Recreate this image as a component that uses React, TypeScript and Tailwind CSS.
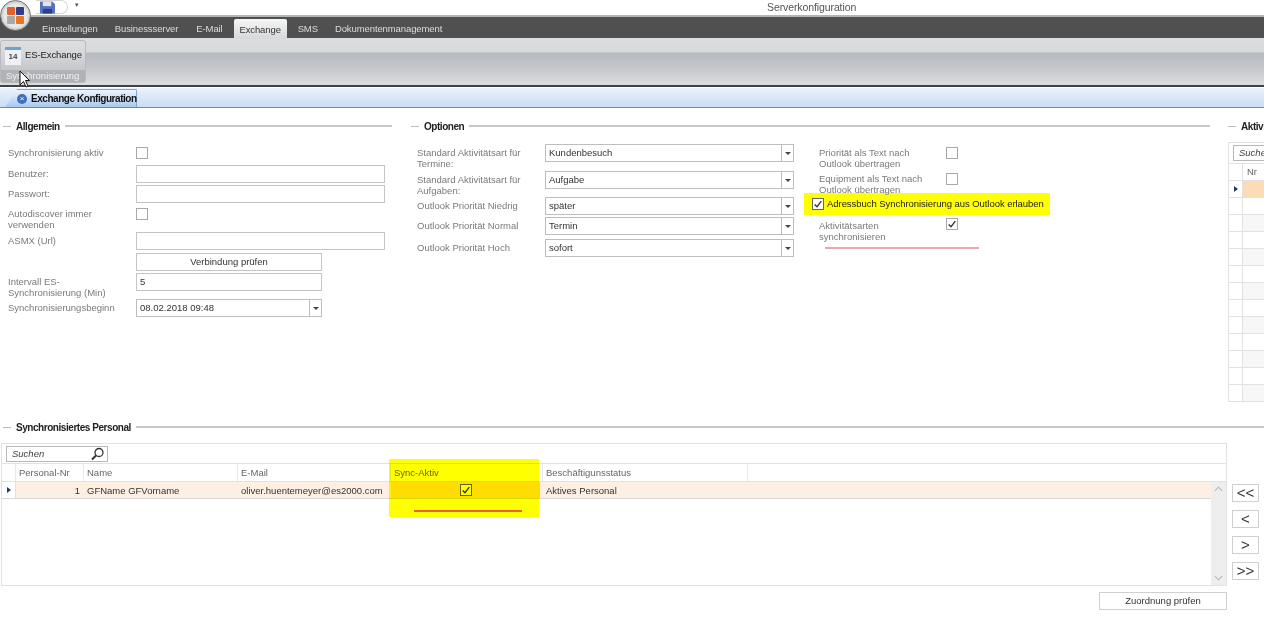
import React from "react";

const labelCls = "text-[9.5px] leading-[11px] text-[#7a7a7a]";

function Legend({ title, className = "" }: { title: string; className?: string }) {
  return (
    <div className={`flex items-center h-[14px] ${className}`}>
      <div className="w-[8px] h-px bg-[#bdbdbd]" />
      <span className="px-[5px] text-[10px] font-bold tracking-[-0.45px] text-[#222] whitespace-nowrap">{title}</span>
      <div className="flex-1 h-[2px] bg-[#c8c8c8]" />
    </div>
  );
}

function Check({ checked = false, strong = false }: { checked?: boolean; strong?: boolean }) {
  return (
    <div className={`w-[12px] h-[12px] shrink-0 border flex items-center justify-center ${strong ? "border-[#666]" : "border-[#a8a8a8]"} bg-white`}>
      {checked && (
        <svg viewBox="0 0 12 12" className="w-[10px] h-[10px]">
          <path d="M2 6.5 L4.8 9.3 L10 2.5" fill="none" stroke="#333" strokeWidth="1.6" />
        </svg>
      )}
    </div>
  );
}

function Input({ value = "", w = "w-[249px]" }: { value?: string; w?: string }) {
  return (
    <div className={`${w} h-[18px] border border-[#c4c4c4] bg-white px-[3px] text-[9.5px] leading-[16px] text-[#333]`}>{value}</div>
  );
}

function Combo({ value, w = "w-[249px]" }: { value: string; w?: string }) {
  return (
    <div className={`${w} h-[18px] border border-[#bdbdbd] bg-white flex text-[9.5px] leading-[16px] text-[#333]`}>
      <span className="flex-1 px-[3px]">{value}</span>
      <span className="w-[12px] border-l border-[#bdbdbd] flex items-center justify-center">
        <span className="w-0 h-0 border-x-[3px] border-x-transparent border-t-[3px] border-t-[#444]" />
      </span>
    </div>
  );
}

function Row({ h, label, children }: { h: string; label?: string; children: React.ReactNode }) {
  return (
    <div className={`flex ${h}`}>
      <div className={`w-[128px] shrink-0 pr-[10px] pt-[3px] ${labelCls}`}>{label}</div>
      {children}
    </div>
  );
}

function OptRow({ h, label, value }: { h: string; label: string; value: string }) {
  return (
    <div className={`flex ${h}`}>
      <div className={`w-[128px] shrink-0 pr-[10px] pt-[3px] ${labelCls}`}>{label}</div>
      <Combo value={value} />
    </div>
  );
}

const rowArrow = <span className="w-0 h-0 border-y-[3px] border-y-transparent border-l-[4px] border-l-[#1f3c6e]" />;

function Allgemein() {
  return (
    <div className="w-[389px] shrink-0">
      <Legend title="Allgemein" />
      <div className="pl-[5px] pt-[11px]">
        <Row h="h-[21px]" label="Synchronisierung aktiv"><div className="pt-[3px]"><Check /></div></Row>
        <Row h="h-[20px]" label="Benutzer:"><Input /></Row>
        <Row h="h-[20px]" label="Passwort:"><Input /></Row>
        <Row h="h-[27px]" label="Autodiscover immer verwenden"><div className="pt-[3px]"><Check /></div></Row>
        <Row h="h-[21px]" label="ASMX (Url)"><Input /></Row>
        <Row h="h-[20px]">
          <div className="w-[186px] h-[18px] border border-[#c4c4c4] bg-white text-center text-[9.5px] leading-[16px] text-[#333]">Verbindung prüfen</div>
        </Row>
        <Row h="h-[26px]" label="Intervall ES-Synchronisierung (Min)"><Input value="5" w="w-[186px]" /></Row>
        <Row h="h-[20px]" label="Synchronisierungsbeginn"><Combo value="08.02.2018 09:48" w="w-[186px]" /></Row>
      </div>
    </div>
  );
}

function Optionen() {
  return (
    <div className="w-[799px] shrink-0 ml-[19px]">
      <Legend title="Optionen" />
      <div className="flex pl-[6px] pt-[11px]">
        <div className="w-[387px] shrink-0">
          <OptRow h="h-[27px]" label="Standard Aktivitätsart für Termine:" value="Kundenbesuch" />
          <OptRow h="h-[26px]" label="Standard Aktivitätsart für Aufgaben:" value="Aufgabe" />
          <OptRow h="h-[20px]" label="Outlook Priorität Niedrig" value="später" />
          <OptRow h="h-[22px]" label="Outlook Priorität Normal" value="Termin" />
          <OptRow h="h-[20px]" label="Outlook Priorität Hoch" value="sofort" />
        </div>
        <div className="w-[246px]">
          <div className="flex h-[26px] pl-[15px]">
            <div className={`w-[127px] shrink-0 pr-[6px] pt-[3px] ${labelCls}`}>Priorität als Text nach Outlook übertragen</div>
            <div className="pt-[3px]"><Check /></div>
          </div>
          <div className="flex h-[23px] pl-[15px]">
            <div className={`w-[127px] shrink-0 pr-[6px] pt-[3px] ${labelCls}`}>Equipment als Text nach Outlook übertragen</div>
            <div className="pt-[3px]"><Check /></div>
          </div>
          <div className="h-[22px] bg-[#ffff00] flex items-center pl-[8px] gap-[3px]">
            <Check checked strong />
            <span className="text-[9.5px] tracking-[-0.05px] text-[#222] whitespace-nowrap">Adressbuch Synchronisierung aus Outlook erlauben</span>
          </div>
          <div className="flex h-[32px] pl-[15px] pt-[2px]">
            <div className={`w-[127px] shrink-0 pr-[40px] pt-[3px] ${labelCls}`}>Aktivitätsarten synchronisieren</div>
            <div className="pt-[1px]"><Check checked /></div>
          </div>
          <div className="ml-[21px] w-[154px] h-[2px] bg-[#f2a3ad]" />
        </div>
      </div>
    </div>
  );
}

function AktivGrid() {
  const rows = Array.from({ length: 13 }, (_, i) => i);
  return (
    <div className="w-[100px] shrink-0 ml-[18px]">
      <Legend title="Aktivitätsarten" />
      <div className="mt-[9px] border border-[#e2e2e2] h-[260px] bg-white overflow-hidden">
        <div className="h-[20px] pl-[4px] pt-[2px]">
          <div className="h-[16px] border border-[#b8b8b8] pl-[5px] text-[9.5px] italic leading-[14px] text-[#444]">Suchen</div>
        </div>
        <div className="flex h-[17px] border-t border-[#e2e2e2]">
          <div className="w-[14px] border-r border-[#e2e2e2]" />
          <div className="pl-[4px] text-[9.5px] leading-[16px] text-[#666]">Nr</div>
        </div>
        {rows.map((i) => (
          <div key={i} className="flex h-[17px] border-t border-[#e2e2e2]">
            <div className="w-[14px] border-r border-[#e2e2e2] flex items-center justify-center">{i === 0 && rowArrow}</div>
            <div className={`flex-1 ${i === 0 ? "bg-[#fbdcb4]" : i % 2 === 0 ? "bg-[#f7f7f7]" : "bg-white"}`} />
          </div>
        ))}
      </div>
    </div>
  );
}

function ArrowBtn({ label }: { label: string }) {
  return (
    <div className="w-[27px] h-[18px] border border-[#d0d0d0] bg-white text-center text-[15px] leading-[15px] text-[#333]">{label}</div>
  );
}

function Personal() {
  const headCls = "border-r border-[#e8e8e8] pl-[3px] text-[9.5px] leading-[18px] text-[#666]";
  return (
    <div className="mt-[18px] pl-[3px]">
      <Legend title="Synchronisiertes Personal" />
      <div className="flex -ml-[2px] mt-[9px]">
        <div className="w-[1226px] h-[143px] border border-[#e2e2e2] bg-white flex flex-col">
          <div className="h-[20px] pl-[4px] pt-[2px]">
            <div className="w-[102px] h-[16px] border border-[#b8b8b8] flex items-center justify-between pl-[5px] pr-[2px]">
              <span className="text-[9.5px] italic text-[#444]">Suchen</span>
              <svg viewBox="0 0 14 14" className="w-[15px] h-[14px]">
                <circle cx="8.5" cy="5.5" r="4" fill="none" stroke="#333" strokeWidth="1.3" />
                <path d="M5.5 8.5 L1.5 12.5" stroke="#333" strokeWidth="2" />
              </svg>
            </div>
          </div>
          <div className="flex h-[17px] border-y border-[#e2e2e2] box-content -mt-px">
            <div className={`w-[14px] ${headCls}`} />
            <div className={`w-[68px] ${headCls}`}>Personal-Nr</div>
            <div className={`w-[154px] ${headCls}`}>Name</div>
            <div className={`w-[153px] ${headCls}`}>E-Mail</div>
            <div className={`w-[152px] ${headCls}`}>Sync-Aktiv</div>
            <div className={`w-[205px] ${headCls}`}>Beschäftigunsstatus</div>
          </div>
          <div className="flex flex-1 min-h-0">
            <div className="flex-1">
              <div className="flex h-[17px] border-b border-[#d8d8d8] text-[9.5px] leading-[18px] text-[#333]">
                <div className="w-[14px] flex items-center justify-center border-r border-[#e2e2e2]">{rowArrow}</div>
                <div className="w-[68px] bg-[#fdf0e2] text-right pr-[4px]">1</div>
                <div className="w-[154px] bg-[#fdf0e2] pl-[3px]">GFName GFVorname</div>
                <div className="w-[153px] bg-[#fdf0e2] pl-[3px] whitespace-nowrap">oliver.huentemeyer@es2000.com</div>
                <div className="w-[149px] bg-[#ffdd00] flex items-center justify-center"><Check checked strong /></div>
                <div className="flex-1 bg-[#fdf0e2] pl-[6px]">Aktives Personal</div>
              </div>
            </div>
            <div className="w-[15px] bg-[#eeeeee] flex flex-col justify-between items-center py-[4px] text-[#b5b5b5]">
              <svg viewBox="0 0 10 6" className="w-[9px] h-[6px]"><path d="M1 5 L5 1 L9 5" fill="none" stroke="currentColor" strokeWidth="1.2" /></svg>
              <svg viewBox="0 0 10 6" className="w-[9px] h-[6px]"><path d="M1 1 L5 5 L9 1" fill="none" stroke="currentColor" strokeWidth="1.2" /></svg>
            </div>
          </div>
        </div>
        <div className="ml-[5px] pt-[41px] flex flex-col gap-[8px]">
          <ArrowBtn label="<<" />
          <ArrowBtn label="<" />
          <ArrowBtn label=">" />
          <ArrowBtn label=">>" />
        </div>
      </div>
      <div className="w-[1226px] -ml-[2px] flex justify-end mt-[6px]">
        <div className="w-[128px] h-[18px] border border-[#d0d0d0] bg-white text-center text-[9.5px] leading-[16px] text-[#333]">Zuordnung prüfen</div>
      </div>
    </div>
  );
}

export default function App() {
  return (
    <div className="relative w-[1264px] h-[625px] overflow-hidden bg-white blur-[0.5px] font-['Liberation_Sans',Arial,sans-serif]">
      <div className="h-[16px] flex">
        <div className="ml-[36px] w-[32px] h-[14px] rounded-r-full border border-l-0 border-[#d5d5d5] flex pl-[4px]">
          <svg viewBox="0 0 16 13" className="w-[15px] h-[13px]">
            <path d="M0 0 H13 L16 3 V13 H0 Z" fill="#5a6fc0" />
            <rect x="3" y="0" width="9" height="5" fill="#dfe4f5" />
            <rect x="3" y="8" width="10" height="5" fill="#2f3f8f" />
          </svg>
        </div>
        <span className="ml-[7px] mt-[1px] text-[7px] leading-[8px] text-[#555]">▾</span>
        <span className="ml-[688px] text-[10.5px] leading-[14px] tracking-[-0.1px] text-[#555]">Serverkonfiguration</span>
      </div>
      <div className="h-[22px] border-t-[2px] border-[#b5b5b5] bg-[#505050] flex items-end text-[9.5px] tracking-[-0.1px] text-[#dcdcdc] box-content -mt-px">
        <span className="h-[20px] leading-[20px] ml-[42px]">Einstellungen</span>
        <span className="h-[20px] leading-[20px] ml-[17px]">Businessserver</span>
        <span className="h-[20px] leading-[20px] ml-[18px]">E-Mail</span>
        <span className="ml-[11px] w-[53px] h-[20px] leading-[21px] text-center rounded-t-[2px] bg-gradient-to-b from-[#f6f6f6] to-[#d5d8dc] text-[#333]">Exchange</span>
        <span className="ml-[11px] h-[20px] leading-[20px]">SMS</span>
        <span className="ml-[17px] h-[20px] leading-[20px]">Dokumentenmanagement</span>
      </div>
      <div className="h-[47px] -mt-[1px] pt-[2px] bg-[linear-gradient(#dcdee0_0%,#d6d8da_30%,#b6b9be_32%,#c8cace_70%,#dcdddf_100%)]">
        <div className="w-[86px] h-[43px] rounded-[3px] border border-[#b8babd] bg-[linear-gradient(#dcdee0_0%,#d6d8da_30%,#c4c6c9_72%)] flex flex-col">
          <div className="flex-1 flex items-center pl-[4px] gap-[4px]">
            <div className="w-[16px] h-[18px] shrink-0 bg-[#eef1f4] border-t-[3px] border-[#6ea2cf] text-center text-[8px] leading-[13px] font-bold text-[#444]">14</div>
            <span className="text-[9.5px] tracking-[-0.1px] text-[#222] whitespace-nowrap">ES-Exchange</span>
          </div>
          <div className="h-[12px] bg-[#b0b2b6] text-[9.5px] leading-[12px] pl-[5px] text-[#f0f0f0]">Synchronisierung</div>
        </div>
      </div>
      <div className="h-[2px] bg-[#3f4144]" />
      <div className="h-[20px] mt-px bg-gradient-to-b from-[#eaf2fc] to-[#c9ddf5] border-b border-[#5a8fc8] pl-[5px] flex items-end">
        <div className="w-[132px] h-[18px] bg-gradient-to-b from-[#eef4fc] to-[#a9c9ef] border-r border-t border-[#7fa6d4] rounded-tr-[2px] [clip-path:polygon(12px_0,100%_0,100%_100%,0_100%)] flex items-center pl-[12px] gap-[4px]">
          <span className="w-[10px] h-[10px] shrink-0 rounded-full bg-[#3f6fc0] text-white text-[8px] leading-[10px] text-center">×</span>
          <span className="text-[10px] font-bold tracking-[-0.45px] text-[#111] whitespace-nowrap">Exchange Konfiguration</span>
        </div>
      </div>
      <div className="flex pl-[3px] pt-[11px]">
        <Allgemein />
        <Optionen />
        <AktivGrid />
      </div>
      <Personal />

      {/* app orb over the ribbon */}
      <div className="absolute left-0 top-0 w-[31px] h-[31px] rounded-full bg-[radial-gradient(circle,#e8e8e8_55%,#8a8a8a_100%)] border border-[#777] grid grid-cols-2 gap-px p-[6px]">
        <div className="bg-[#e2622a] rounded-[1px]" />
        <div className="bg-[#2d3f86] rounded-[1px]" />
        <div className="bg-[#a9a9a9] rounded-[1px]" />
        <div className="bg-[#e8771f] rounded-[1px]" />
      </div>

      {/* yellow marker over the grid column */}
      <div className="absolute left-[389px] top-[459px] w-[150px] h-[58px] bg-[#ffff00] mix-blend-multiply" />
      <div className="absolute left-[414px] top-[510px] w-[108px] h-[2px] bg-[#e8653a]" />

      {/* mouse cursor */}
      <svg viewBox="0 0 11 18" className="absolute left-[19px] top-[70px] w-[11px] h-[18px]">
        <path d="M1 1 V15 L4.5 11.5 L7 17 L9 16 L6.5 10.5 H10.5 Z" fill="#fff" stroke="#111" strokeWidth="1" />
      </svg>
    </div>
  );
}
